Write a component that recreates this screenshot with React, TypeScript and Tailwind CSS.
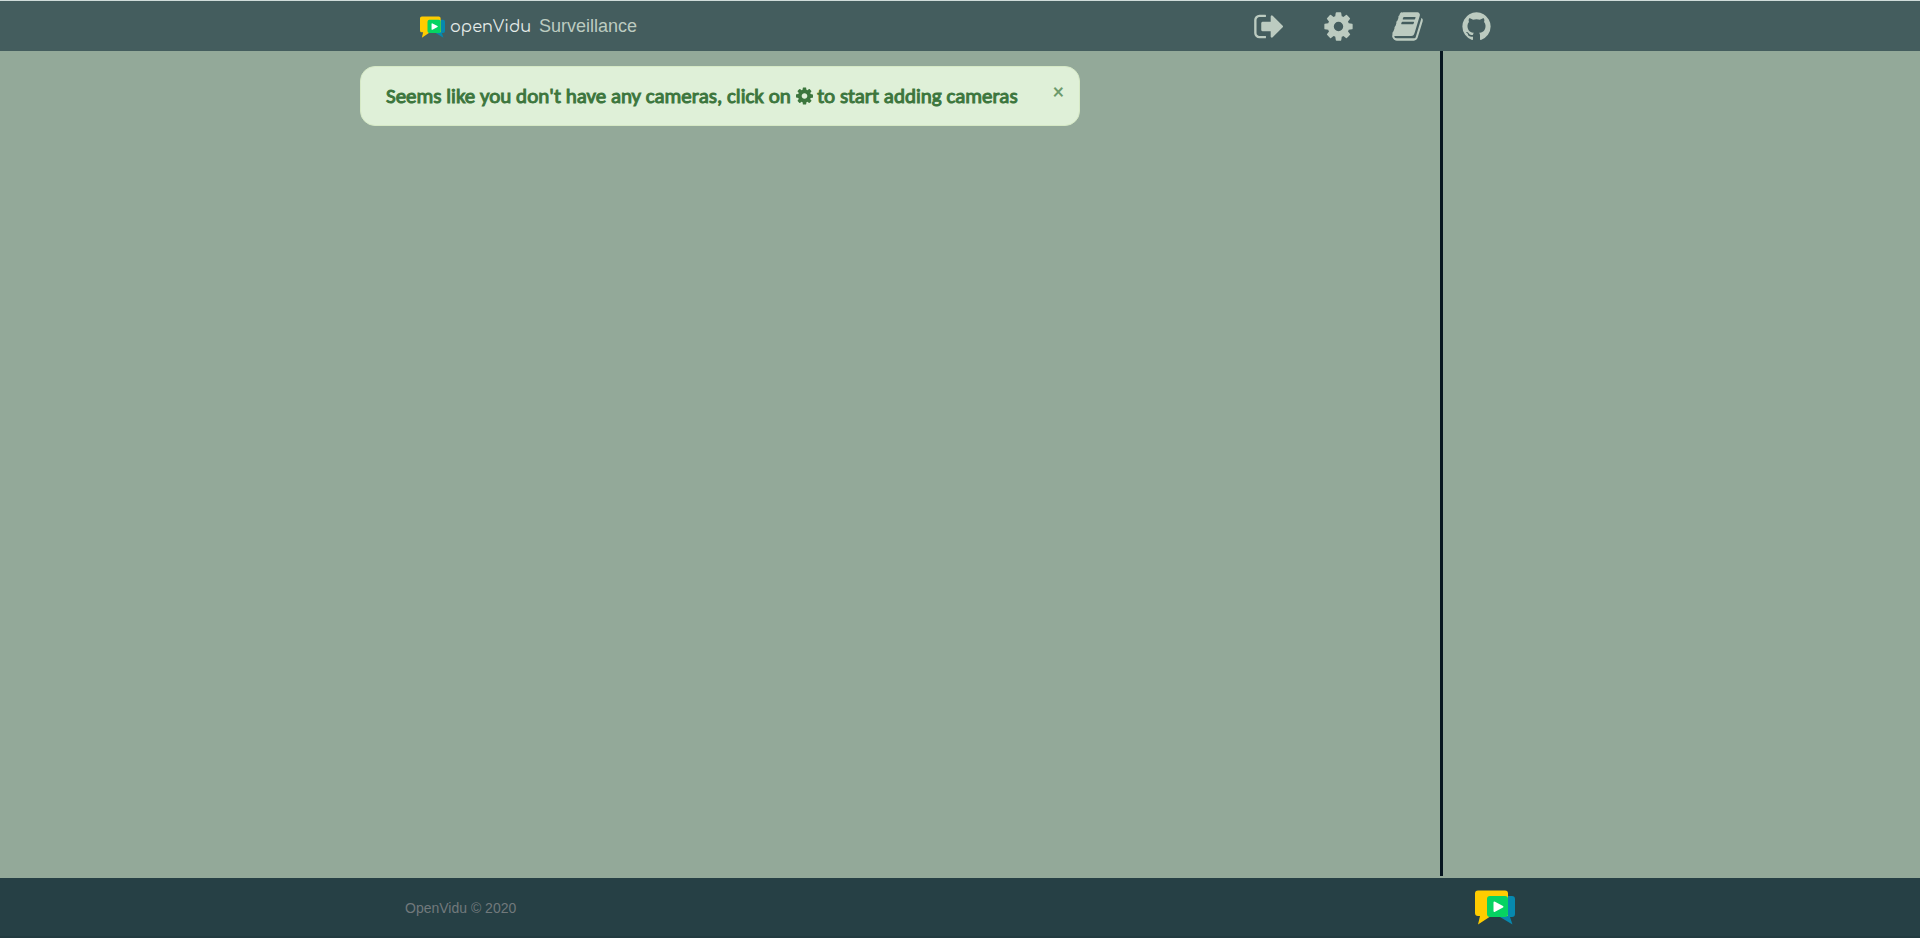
import React from "react";

const SIGN_OUT =
  "M704 1440q0 4 1 20t.5 26.5-3 23.5-10 19.5-20.5 6.5h-320q-119 0-203.5-84.5t-84.5-203.5v-704q0-119 84.5-203.5t203.5-84.5h320q13 0 22.5 9.5t9.5 22.5q0 4 1 20t.5 26.5-3 23.5-10 19.5-20.5 6.5h-320q-66 0-113 47t-47 113v704q0 66 47 113t113 47h312l11.5 1 11.5 3 8 5.5 7 9 2 13.5zm928-544q0 26-19 45l-544 544q-19 19-45 19t-45-19-19-45v-288h-448q-26 0-45-19t-19-45v-384q0-26 19-45t45-19h448v-288q0-26 19-45t45-19 45 19l544 544q19 19 19 45z";
const COG =
  "M1152 896q0-106-75-181t-181-75-181 75-75 181 75 181 181 75 181-75 75-181zm512-109v222q0 12-8 23t-20 13l-185 28q-19 54-39 91 35 50 107 138 10 12 10 25t-9 23q-27 37-99 108t-94 71q-12 0-26-9l-138-108q-44 23-91 38-16 136-29 186-7 28-36 28h-222q-14 0-24.5-8.5t-11.5-21.5l-28-184q-49-16-90-37l-141 107q-10 9-25 9-14 0-25-11-126-114-165-168-7-10-7-23 0-12 8-23 15-21 51-66.5t54-70.5q-27-50-41-99l-183-27q-13-2-21-12.5t-8-23.5v-222q0-12 8-23t19-13l186-28q14-46 39-92-40-57-107-138-10-12-10-24 0-10 9-23 26-36 98.5-107.5t94.5-71.5q13 0 26 10l138 107q44-23 91-38 16-136 29-186 7-28 36-28h222q14 0 24.5 8.5t11.5 21.5l28 184q49 16 90 37l142-107q9-9 24-9 13 0 25 10 129 119 165 170 7 8 7 22 0 12-8 23-15 21-51 66.5t-54 70.5q26 50 41 98l183 28q13 2 21 12.5t8 23.5z";
const BOOK =
  "M1703 478q40 57 18 129l-275 906q-19 64-76.5 107.5t-122.5 43.5h-923q-77 0-148.5-53.5t-99.5-131.5q-24-67-2-127 0-4 3-27t4-37q1-8-3-21.5t-3-19.5q2-11 8-21t16.5-23.5 16.5-23.5q23-38 45-91.5t30-91.5q3-10 .5-30t-.5-28q3-11 17-28t17-23q21-36 42-92t25-90q1-9-2.5-32t.5-28q4-13 22-30.5t22-22.5q19-26 42.5-84.5t27.5-96.5q1-8-3-25.5t-2-26.5q2-8 9-18t18-23 17-21q8-12 16.5-30.5t15-35 16-36 19.5-32 26.5-23.5 36-11.5 47.5 5.5l-1 3q38-9 51-9h761q74 0 114 56t18 130l-274 906q-36 119-71.5 153.5t-128.5 34.5h-869q-27 0-38 15-11 16-1 43 24 70 144 70h923q29 0 56-15.5t35-41.5l300-987q7-22 5-57 38 15 59 43zm-1064 2q-4 13 2 22.5t20 9.5h608q13 0 25.5-9.5t16.5-22.5l21-64q4-13-2-22.5t-20-9.5h-608q-13 0-25.5 9.5t-16.5 22.5zm-83 256q-4 13 2 22.5t20 9.5h608q13 0 25.5-9.5t16.5-22.5l21-64q4-13-2-22.5t-20-9.5h-608q-13 0-25.5 9.5t-16.5 22.5z";
const GITHUB =
  "M896 128q209 0 385.5 103t279.5 279.5 103 385.5q0 251-146.5 451.5t-378.5 277.5q-27 5-40-7t-13-30q0-3 .5-76.5t.5-134.5q0-97-52-142 57-6 102.5-18t94-39 81-66.5 53-105 20.5-150.5q0-119-79-206 37-91-8-204-28-9-81 11t-92 44l-38 24q-93-26-192-26t-192 26q-16-11-42.5-27t-83.5-38.5-85-13.5q-45 113-8 204-79 87-79 206 0 85 20.5 150t52.5 105 80.5 67 94 39 102.5 18q-39 36-49 103-21 10-45 15t-57 5-65.5-21.5-55.5-62.5q-19-32-48.5-52t-49.5-24l-20-3q-21 0-29 4.5t-5 11.5 9 14 13 12l7 5q22 10 43.5 38t31.5 51l10 23q13 38 44 61.5t67 30 69.5 7 55.5-3.5l23-4q0 38 .5 88.5t.5 54.5q0 18-13 30t-40 7q-232-77-378.5-277.5t-146.5-451.5q0-209 103-385.5t279.5-279.5 385.5-103z";

function Icon({ path, className, viewBox = "0 0 1792 1792" }: { path: string; className: string; viewBox?: string }) {
  return (
    <svg viewBox={viewBox} fill="currentColor" aria-hidden="true" className={className}>
      <path d={path} />
    </svg>
  );
}

function Logo({ className }: { className: string }) {
  return (
    <svg viewBox="0 0 40 35" aria-hidden="true" className={className}>
      <path d="M15 6H37a3 3 0 0 1 3 3V24a3 3 0 0 1-3 3h-2L37.500 34.500 25 27H18z" fill="#0788ae" />
      <path d="M3 0.500H30a3 3 0 0 1 3 3V26H16L3 34.500 5 26H3a3 3 0 0 1-3-3V3.500a3 3 0 0 1 3-3z" fill="#ffcc00" />
      <rect x="12" y="6" width="21" height="21" rx="3" fill="#06d362" />
      <path d="M18.500 12.500a1 1 0 0 1 1.500-.8l8 4.300a.8.8 0 0 1 0 1.400l-8 4.300a1 1 0 0 1-1.500-.8z" fill="#fff" />
    </svg>
  );
}

const LINKS = [
  { label: "Log out", path: SIGN_OUT },
  { label: "Settings", path: COG },
  { label: "Documentation", path: BOOK },
  { label: "GitHub", path: GITHUB },
];

export default function App() {
  return (
    <div className="flex min-h-screen flex-col bg-[#93a999] font-['Liberation_Sans',Arial,sans-serif]">
      <header className="border-t border-[#d0dcda] bg-[#445d5e] text-[#bccbc0]">
        <nav className="mx-auto flex h-[50px] w-full max-w-[1170px] items-center justify-between pr-[52px] pl-[45px]">
          <a href="#" className="flex items-center">
            <span className="flex items-center pt-0.5">
              <Logo className="h-[22px] w-[25px] shrink-0" />
              <span className="ml-[5px] font-['Comfortaa',Lato,sans-serif] text-base leading-6 text-[#e6ecea]">openVidu</span>
            </span>
            <span className="ml-2 text-lg leading-5">Surveillance</span>
          </a>
          <div className="flex items-center gap-9">
            {LINKS.map((link) => (
              <a key={link.label} href="#" aria-label={link.label}>
                <Icon path={link.path} className="size-[33px]" />
              </a>
            ))}
          </div>
        </nav>
      </header>

      <main className="mb-0.5 flex flex-1">
        <section className="w-3/4 pt-[15px]">
          <div
            role="alert"
            className="mx-auto flex min-h-[60px] w-1/2 items-center justify-between rounded-[15px] border border-[#d6e9c6] bg-[#dff0d8] pr-[15px] pl-[25px] font-['Lato',sans-serif] text-[#3c763d]"
          >
            <p className="font-['Carlito',Lato,sans-serif] text-[21px] leading-6 [-webkit-text-stroke:1px_currentColor]">
              Seems like you don't have any cameras, click on{" "}
              <Icon path={COG} viewBox="128 0 1536 1792" className="inline h-5 w-[17px] align-[-3px]" /> to start adding cameras
            </p>
            <button type="button" aria-label="Close" className="mb-2.5 text-xl leading-5 font-bold opacity-70">
              ×
            </button>
          </div>
        </section>
        <aside className="w-1/4 border-l-[3px] border-[#071620]" />
      </main>

      <footer className="border-b-2 border-[#223b40] bg-[#264045]">
        <div className="mx-auto flex h-[58px] w-full max-w-[1170px] items-center justify-between px-[30px]">
          <p className="pt-0.5 text-sm leading-5 text-[#71797c]">OpenVidu © 2020</p>
          <Logo className="h-[35px] w-10" />
        </div>
      </footer>
    </div>
  );
}
